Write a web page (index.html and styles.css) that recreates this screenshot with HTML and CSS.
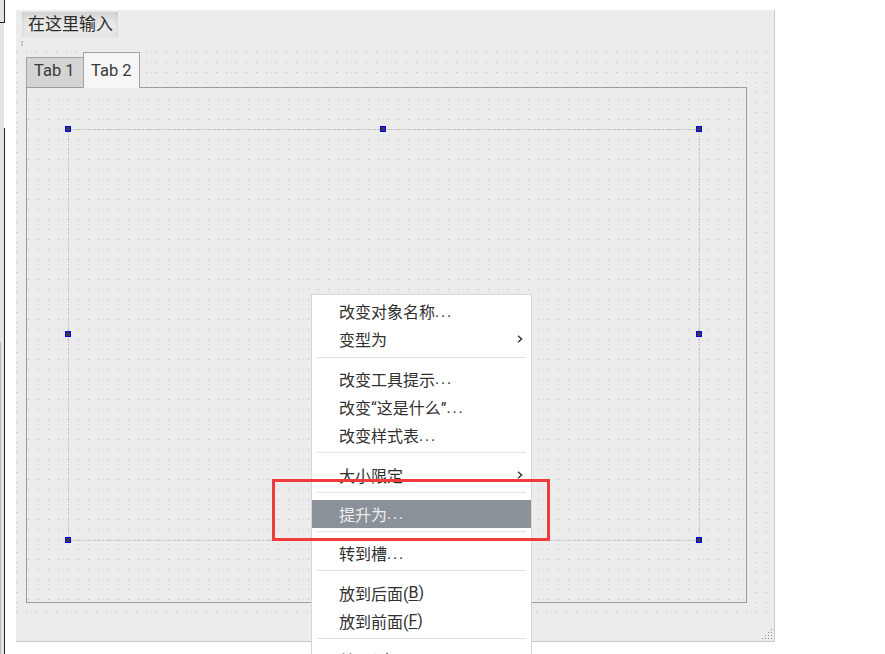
FILE: index.html
```html
<!DOCTYPE html>
<html lang="zh">
<head>
<meta charset="utf-8">
<title>Designer</title>
<link rel="stylesheet" href="styles.css">
</head>
<body>
<div class="screen">
  <div class="edge">
    <div class="edge-top"></div>
    <div class="edge-mid"></div>
    <div class="edge-low">
      <div class="edge-low-a"></div>
      <div class="edge-low-b"></div>
    </div>
  </div>
  <div class="form">
    <div class="menubar">
      <div class="typehere">在这里输入</div>
      <div class="grip-mark"></div>
    </div>
    <div class="central">
      <div class="tabwidget">
        <div class="tabbar">
          <div class="tab tab1">Tab 1</div>
          <div class="tab tab2">Tab 2</div>
        </div>
        <div class="panel">
          <div class="page">
            <div class="selection">
              <span class="handle h-tl"></span>
              <span class="handle h-tc"></span>
              <span class="handle h-tr"></span>
              <span class="handle h-ml"></span>
              <span class="handle h-mr"></span>
              <span class="handle h-bl"></span>
              <span class="handle h-bc"></span>
              <span class="handle h-br"></span>
            </div>
          </div>
        </div>
      </div>
    </div>
    <div class="statusbar">
      <svg class="sizegrip" width="10" height="10" viewBox="0 0 10 10">
        <rect x="9" y="0" width="1" height="1"/>
        <rect x="6" y="3" width="1" height="1"/><rect x="9" y="3" width="1" height="1"/>
        <rect x="3" y="6" width="1" height="1"/><rect x="6" y="6" width="1" height="1"/><rect x="9" y="6" width="1" height="1"/>
        <rect x="0" y="9" width="1" height="1"/><rect x="3" y="9" width="1" height="1"/><rect x="6" y="9" width="1" height="1"/><rect x="9" y="9" width="1" height="1"/>
      </svg>
    </div>
  </div>
</div>

<div class="menu">
  <div class="mi">改变对象名称<span class="ell">...</span></div>
  <div class="mi">变型为<svg class="chev" width="6" height="8" viewBox="0 0 6 8"><polyline points="1,0.8 4.6,4 1,7.2"/></svg></div>
  <div class="sep"></div>
  <div class="mi">改变工具提示<span class="ell">...</span></div>
  <div class="mi">改变“这是什么”<span class="ell">...</span></div>
  <div class="mi">改变样式表<span class="ell">...</span></div>
  <div class="sep"></div>
  <div class="mi">大小限定<svg class="chev" width="6" height="8" viewBox="0 0 6 8"><polyline points="1,0.8 4.6,4 1,7.2"/></svg></div>
  <div class="sep"></div>
  <div class="mi active">提升为<span class="ell">...</span></div>
  <div class="sep"></div>
  <div class="mi">转到槽<span class="ell">...</span></div>
  <div class="sep"></div>
  <div class="mi">放到后面(<u>B</u>)</div>
  <div class="mi">放到前面(<u>F</u>)</div>
  <div class="sep"></div>
  <div class="mi">剪切(<u>T</u>)</div>
</div>

<div class="redbox"></div>
</body>
</html>
```

FILE: styles.css
```css
html, body {
  margin: 0;
  padding: 0;
  background: #ffffff;
}

body {
  width: 885px;
  height: 654px;
  overflow: hidden;
  position: relative;
  font-family: Roboto, "Noto Sans CJK SC", sans-serif;
  color: #303030;
}

.screen {
  display: flex;
  height: 654px;
}

/* left window edge */
.edge {
  width: 16px;
  flex: none;
  display: flex;
  flex-direction: column;
}

.edge-top {
  width: 4px;
  height: 22px;
  background: #e3e3e3;
  border-right: 1px solid #262626;
  border-bottom: 1px solid #262626;
}

.edge-mid {
  width: 4px;
  height: 105px;
  background: #e3e3e3;
}

.edge-low {
  flex: 1;
  width: 4px;
  background: #e3e3e3;
  border-right: 1px solid #262626;
  display: flex;
  flex-direction: column;
}

.edge-low-a {
  height: 214px;
}

.edge-low-b {
  flex: 1;
  width: 0;
  border-left: 1px solid #bdbdbd;
}

/* form */
.form {
  margin-top: 10px;
  width: 758px;
  height: 631px;
  border-right: 1px solid #c9c9c9;
  border-bottom: 1px solid #c9c9c9;
  background: #ececec;
  display: flex;
  flex-direction: column;
  flex: none;
}

.menubar {
  height: 36px;
  flex: none;
  display: flex;
  flex-direction: column;
}

.typehere {
  margin: 2px 0 0 6px;
  width: 96px;
  height: 25px;
  box-sizing: border-box;
  padding-left: 6px;
  font-size: 17px;
  line-height: 25px;
  color: #2c2c2c;
  background: linear-gradient(180deg, #d3d3d3 0%, #e4e4e4 35%, #ebebeb 65%, #e3e3e3 100%);
  box-shadow: inset 5px 0 5px -4px rgba(0, 0, 0, 0.07), inset -5px 0 5px -4px rgba(0, 0, 0, 0.07);
}

.grip-mark {
  margin: 4px 0 0 5px;
  width: 2px;
  height: 1px;
  border-top: 2px solid #bdbdbd;
  border-bottom: 2px solid #bdbdbd;
}

.central {
  height: 574px;
  flex: none;
  box-sizing: border-box;
  padding: 6px 0 0 10px;
  background-color: #ececec;
  background-image:
    linear-gradient(to right, transparent 1px, #ececec 1px),
    linear-gradient(to bottom, #bcbcbc 1px, transparent 1px);
  background-size: 10px 10px;
  background-position: 0 6px;
}

.tabwidget {
  width: 721px;
  height: 551px;
  display: flex;
  flex-direction: column;
}

.tabbar {
  height: 35px;
  flex: none;
  display: flex;
  align-items: flex-end;
}

.tab {
  box-sizing: border-box;
  border: 1px solid #a2a2a2;
  border-bottom: none;
  padding-left: 7px;
  font-size: 16.5px;
  line-height: 20px;
  color: #3a3a3a;
}

.tab1 {
  width: 58px;
  height: 30px;
  padding-top: 3px;
  background: #d4d4d4;
}

.tab2 {
  position: relative;
  z-index: 1;
  width: 57px;
  height: 36px;
  margin-left: -1px;
  margin-bottom: -1px;
  padding-top: 8px;
  background: #f6f6f6;
}

.panel {
  height: 516px;
  box-sizing: border-box;
  border: 1px solid #9d9d9d;
  background: #ececec;
  padding-top: 10px;
}

.page {
  position: relative;
  height: 504px;
  background-color: #ececec;
  background-image:
    linear-gradient(to right, transparent 1px, #ececec 1px),
    linear-gradient(to bottom, #bcbcbc 1px, transparent 1px);
  background-size: 10px 10px;
  background-position: 1px 1px;
}

.selection {
  position: absolute;
  left: 41px;
  top: 31px;
  width: 632px;
  height: 412px;
  box-sizing: border-box;
  border: 1px dotted #bdbdbd;
}

.handle {
  position: absolute;
  width: 6px;
  height: 6px;
  box-sizing: border-box;
  border: 1px solid #0000ff;
  background: #3a3a44;
}

.h-tl { left: -4px; top: -4px; }
.h-tc { left: 311px; top: -4px; }
.h-tr { left: 627px; top: -4px; }
.h-ml { left: -4px; top: 201px; }
.h-mr { left: 627px; top: 201px; }
.h-bl { left: -4px; top: 407px; }
.h-bc { left: 311px; top: 407px; }
.h-br { left: 627px; top: 407px; }

.statusbar {
  flex: 1;
  display: flex;
  justify-content: flex-end;
  align-items: flex-end;
  padding: 0 2px 2px 0;
}

.sizegrip {
  display: block;
  fill: #8c8c8c;
}

/* context menu */
.menu {
  position: absolute;
  left: 311px;
  top: 294px;
  width: 221px;
  box-sizing: border-box;
  border: 1px solid #d6d6d6;
  background: #ffffff;
  padding-top: 2px;
  font-family: Roboto, "Noto Sans CJK SC", sans-serif;
  font-size: 16px;
  color: #303030;
}

.mi {
  height: 28.3px;
  display: flex;
  align-items: center;
  padding: 0 8px 0 27px;
  white-space: nowrap;
}

.mi u {
  text-decoration-thickness: 1px;
  text-underline-offset: 2px;
}

.mi.active {
  background: #8a9199;
  color: #eeeeee;
}

.ell {
  letter-spacing: 1.8px;
}

.chev {
  margin-left: auto;
  fill: none;
  stroke: #333333;
  stroke-width: 1.4;
}

.sep {
  height: 1px;
  margin: 3px 5px 7px;
  background: #e2e2e2;
}

.redbox {
  position: absolute;
  left: 272px;
  top: 479px;
  width: 278px;
  height: 62px;
  box-sizing: border-box;
  border: 3px solid #ef3b3b;
}
```
